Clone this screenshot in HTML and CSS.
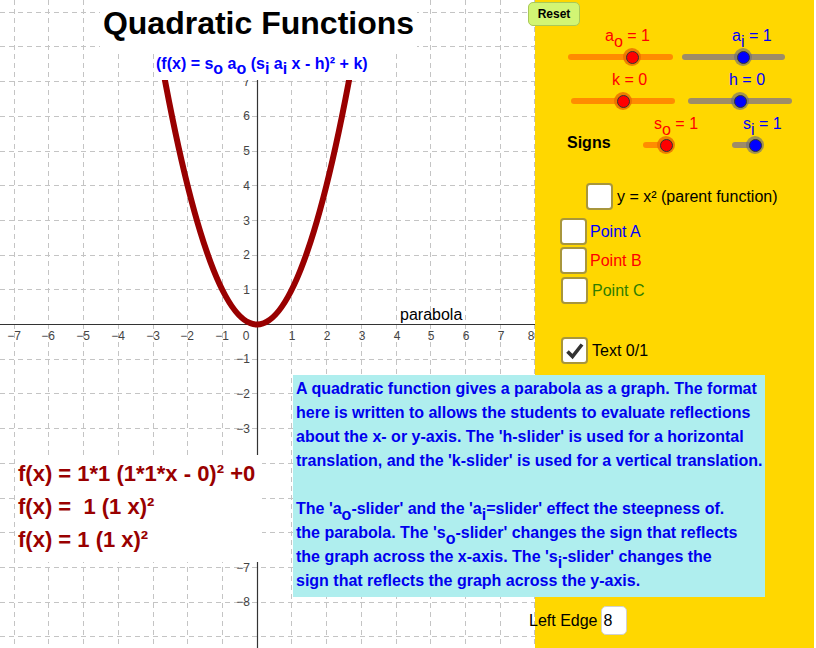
FILE: index.html
```html
<!DOCTYPE html>
<html lang="en">
<head>
<meta charset="utf-8">
<title>Quadratic Functions</title>
<link rel="stylesheet" href="styles.css">
</head>
<body>
<div class="app">
  <div class="graph">
    <svg class="plot" width="535" height="648" viewBox="0 0 535 648" xmlns="http://www.w3.org/2000/svg">
      <g class="grid">
        <line x1="14.5" y1="0" x2="14.5" y2="648"/>
        <line x1="48.5" y1="0" x2="48.5" y2="648"/>
        <line x1="83.5" y1="0" x2="83.5" y2="648"/>
        <line x1="118.5" y1="0" x2="118.5" y2="648"/>
        <line x1="153.5" y1="0" x2="153.5" y2="648"/>
        <line x1="187.5" y1="0" x2="187.5" y2="648"/>
        <line x1="222.5" y1="0" x2="222.5" y2="648"/>
        <line x1="291.5" y1="0" x2="291.5" y2="648"/>
        <line x1="326.5" y1="0" x2="326.5" y2="648"/>
        <line x1="361.5" y1="0" x2="361.5" y2="648"/>
        <line x1="396.5" y1="0" x2="396.5" y2="648"/>
        <line x1="430.5" y1="0" x2="430.5" y2="648"/>
        <line x1="465.5" y1="0" x2="465.5" y2="648"/>
        <line x1="500.5" y1="0" x2="500.5" y2="648"/>
        <line x1="534.5" y1="0" x2="534.5" y2="648"/>
        <line x1="0" y1="12.5" x2="535" y2="12.5"/>
        <line x1="0" y1="46.5" x2="535" y2="46.5"/>
        <line x1="0" y1="81.5" x2="535" y2="81.5"/>
        <line x1="0" y1="116.5" x2="535" y2="116.5"/>
        <line x1="0" y1="151.5" x2="535" y2="151.5"/>
        <line x1="0" y1="185.5" x2="535" y2="185.5"/>
        <line x1="0" y1="220.5" x2="535" y2="220.5"/>
        <line x1="0" y1="255.5" x2="535" y2="255.5"/>
        <line x1="0" y1="289.5" x2="535" y2="289.5"/>
        <line x1="0" y1="359.5" x2="535" y2="359.5"/>
        <line x1="0" y1="393.5" x2="535" y2="393.5"/>
        <line x1="0" y1="428.5" x2="535" y2="428.5"/>
        <line x1="0" y1="463.5" x2="535" y2="463.5"/>
        <line x1="0" y1="498.5" x2="535" y2="498.5"/>
        <line x1="0" y1="532.5" x2="535" y2="532.5"/>
        <line x1="0" y1="567.5" x2="535" y2="567.5"/>
        <line x1="0" y1="602.5" x2="535" y2="602.5"/>
        <line x1="0" y1="636.5" x2="535" y2="636.5"/>
      </g>
      <g class="axes">
        <line x1="0" y1="324.5" x2="535" y2="324.5"/>
        <line x1="257.5" y1="0" x2="257.5" y2="648"/>
      </g>
      <g class="ticks-x">
        <text x="14" y="340">−7</text>
        <text x="48" y="340">−6</text>
        <text x="83" y="340">−5</text>
        <text x="118" y="340">−4</text>
        <text x="153" y="340">−3</text>
        <text x="187" y="340">−2</text>
        <text x="222" y="340">−1</text>
        <text x="246" y="340">0</text>
        <text x="292" y="340">1</text>
        <text x="327" y="340">2</text>
        <text x="362" y="340">3</text>
        <text x="397" y="340">4</text>
        <text x="431" y="340">5</text>
        <text x="466" y="340">6</text>
        <text x="501" y="340">7</text>
        <text x="531" y="340">8</text>
      </g>
      <g class="ticks-y">
        <text x="250" y="85.5">7</text>
        <text x="250" y="120">6</text>
        <text x="250" y="155">5</text>
        <text x="250" y="189.5">4</text>
        <text x="250" y="224.5">3</text>
        <text x="250" y="259">2</text>
        <text x="250" y="293.5">1</text>
        <text x="250" y="363">−1</text>
        <text x="250" y="397.5">−2</text>
        <text x="250" y="432.5">−3</text>
        <text x="250" y="571.5">−7</text>
        <text x="250" y="606">−8</text>
      </g>
      <path class="curve" d="M156.4 32.7 Q257 616.3 357.6 32.7"/>
      <text class="curve-name" x="400" y="319.5">parabola</text>
    </svg>
  </div>

  <div class="panel">
    <div class="row">
      <div class="slider s-ao">
        <div class="lbl red">a<sub>o</sub> = 1</div>
        <div class="track"><div class="bar orange"></div><span class="knob red-knob" style="left:64px"></span></div>
      </div>
      <div class="slider s-ai">
        <div class="lbl blue">a<sub>i</sub> = 1</div>
        <div class="track"><div class="bar gray"></div><span class="knob blue-knob" style="left:61px"></span></div>
      </div>
    </div>
    <div class="row">
      <div class="slider s-k">
        <div class="lbl red">k = 0</div>
        <div class="track"><div class="bar orange"></div><span class="knob red-knob" style="left:52px"></span></div>
      </div>
      <div class="slider s-h">
        <div class="lbl blue">h = 0</div>
        <div class="track"><div class="bar gray"></div><span class="knob blue-knob" style="left:52px"></span></div>
      </div>
    </div>
    <div class="row">
      <div class="signs">Signs</div>
      <div class="slider s-so">
        <div class="lbl red">s<sub>o</sub> = 1</div>
        <div class="track"><div class="bar orange"></div><span class="knob red-knob" style="left:23px"></span></div>
      </div>
      <div class="slider s-si">
        <div class="lbl blue">s<sub>i</sub> = 1</div>
        <div class="track"><div class="bar gray"></div><span class="knob blue-knob" style="left:23px"></span></div>
      </div>
    </div>

    <div class="checks">
      <label class="check c-parent"><span class="box"></span><span class="ctext">y = x² (parent function)</span></label>
      <label class="check c-a"><span class="box"></span><span class="ctext blue">Point A</span></label>
      <label class="check c-b"><span class="box"></span><span class="ctext red">Point B</span></label>
      <label class="check c-c"><span class="box"></span><span class="ctext green">Point C</span></label>
      <label class="check c-text"><span class="box"><svg class="tick" viewBox="0 0 23 23" width="23" height="23"><path d="M4.5 12.5 L9.5 17.5 L19 5.5"/></svg></span><span class="ctext">Text 0/1</span></label>
    </div>
  </div>

  <div class="title">Quadratic Functions</div>
  <div class="subtitle">(f(x) = s<sub>o</sub> a<sub>o</sub> (s<sub>i</sub> a<sub>i</sub> x - h)² + k)</div>

  <div class="formula">
    <div>f(x) = 1*1 (1*1*x - 0)² +0</div>
    <div>f(x) =&nbsp; 1 (1 x)²</div>
    <div>f(x) = 1 (1 x)²</div>
  </div>

  <div class="note">
    A quadratic function gives a parabola as a graph. The format<br>
    here is written to allows the students to evaluate reflections<br>
    about the x- or y-axis. The 'h-slider' is used for a horizontal<br>
    translation, and the 'k-slider' is used for a vertical translation.<br>
    <br>
    The 'a<sub>o</sub>-slider' and the 'a<sub>i</sub>=slider' effect the steepness of.<br>
    the parabola. The 's<sub>o</sub>-slider' changes the sign that reflects<br>
    the graph across the x-axis. The 's<sub>i</sub>-slider' changes the<br>
    sign that reflects the graph across the y-axis.
  </div>

  <button class="reset" type="button">Reset</button>

  <div class="leftedge"><span>Left Edge</span><span class="field">8</span></div>
</div>
</body>
</html>
```

FILE: styles.css
```css
* { box-sizing: border-box; }

html, body {
  margin: 0;
  padding: 0;
  background: #ffffff;
}

body {
  font-family: "Liberation Sans", Arial, sans-serif;
  color: #000;
}

.app {
  position: relative;
  width: 816px;
  height: 648px;
  overflow: hidden;
  display: flex;
}

/* ---------- graph ---------- */
.graph {
  width: 535px;
  height: 648px;
  flex: none;
  background: #fff;
}

.plot { display: block; }

.grid line {
  stroke: #c4c4c4;
  stroke-width: 1;
  stroke-dasharray: 5 4;
}

.axes line {
  stroke: #333;
  stroke-width: 1.2;
}

.ticks-x text,
.ticks-y text {
  font-family: "Liberation Sans", Arial, sans-serif;
  font-size: 12px;
  fill: #444;
}

.ticks-x text { text-anchor: middle; }
.ticks-y text { text-anchor: end; }

.curve {
  fill: none;
  stroke: #990000;
  stroke-width: 6;
}

.curve-name {
  font-family: "Liberation Sans", Arial, sans-serif;
  font-size: 16px;
  fill: #000;
}

/* ---------- right panel ---------- */
.panel {
  width: 279px;
  height: 648px;
  flex: none;
  background: #ffd700;
  padding-top: 27px;
}

.row {
  display: flex;
  height: 44px;
}

.slider {
  flex: none;
}

.lbl {
  height: 18px;
  line-height: 18px;
  font-size: 16px;
  white-space: nowrap;
}

.lbl sub {
  font-size: 16px;
  line-height: 0;
  vertical-align: -6px;
}

.red { color: #ff0000; }
.blue { color: #0000ff; }
.green { color: #2f7d00; }

.track {
  position: relative;
  height: 16px;
  margin-top: 4px;
}

.bar {
  position: absolute;
  left: 0;
  right: 0;
  top: 5px;
  height: 6px;
  border-radius: 3px;
}

.bar.orange { background: #ff8c00; }
.bar.gray { background: #9e8c68; }

.knob {
  position: absolute;
  top: -1px;
  width: 18px;
  height: 18px;
  margin-left: -9px;
  border-radius: 50%;
  display: flex;
  align-items: center;
  justify-content: center;
}

.knob::after {
  content: "";
  width: 11px;
  height: 11px;
  border-radius: 50%;
  border: 1px solid #333;
}

.red-knob { background: rgba(235, 110, 0, 0.85); }
.red-knob::after { background: #ff0000; }

.blue-knob { background: rgba(110, 110, 120, 0.65); }
.blue-knob::after { background: #0000ff; }

.s-ao { margin-left: 33px; width: 105px; }
.s-ao .lbl { padding-left: 37px; }
.s-ai { margin-left: 9px; width: 103px; }
.s-ai .lbl { padding-left: 50px; }

.s-k { margin-left: 36px; width: 104px; }
.s-k .lbl { padding-left: 41px; }
.s-h { margin-left: 13px; width: 104px; }
.s-h .lbl { padding-left: 41px; }

.signs {
  flex: none;
  width: 76px;
  margin-left: 32px;
  margin-top: 19px;
  font-size: 16px;
  font-weight: bold;
  line-height: 18px;
}

.s-so { width: 29px; }
.s-so .lbl { padding-left: 11px; }
.s-si { margin-left: 60px; width: 30px; }
.s-si .lbl { padding-left: 11px; }

/* checkboxes */
.checks {
  display: flex;
  flex-direction: column;
  align-items: flex-start;
  margin-top: 24px;
}

.check {
  display: flex;
  align-items: center;
  font-size: 16px;
  line-height: 18px;
}

.box {
  width: 27px;
  height: 27px;
  border: 2px solid #a8963c;
  border-radius: 4px;
  background: #fff;
  display: flex;
  align-items: center;
  justify-content: center;
}

.tick path {
  fill: none;
  stroke: #333;
  stroke-width: 3.6;
}

.ctext { margin-left: 3px; }

.c-parent { margin-left: 51px; }
.c-parent .ctext { margin-left: 4px; }
.c-a { margin-left: 25px; margin-top: 8px; }
.c-b { margin-left: 25px; margin-top: 2px; }
.c-c { margin-left: 26px; margin-top: 3px; }
.c-c .ctext { margin-left: 4px; }
.c-text { margin-left: 26px; margin-top: 33px; }
.c-text .ctext { margin-left: 4px; }

/* ---------- overlays ---------- */
.title {
  position: absolute;
  left: 100px;
  top: 0;
  width: 317px;
  height: 52px;
  background: #fff;
  text-align: center;
  font-size: 32px;
  font-weight: bold;
  line-height: 36px;
  padding-top: 5px;
  white-space: nowrap;
}

.subtitle {
  position: absolute;
  left: 155px;
  top: 52px;
  width: 215px;
  height: 28px;
  background: #fff;
  color: #0000ff;
  font-size: 16px;
  font-weight: bold;
  line-height: 18px;
  padding-top: 3px;
  padding-left: 1px;
  white-space: nowrap;
}

.subtitle sub {
  font-size: 16px;
  line-height: 0;
  vertical-align: -5px;
}

.formula {
  position: absolute;
  left: 15px;
  top: 455px;
  width: 247px;
  height: 107px;
  background: #fff;
  color: #990000;
  font-size: 22px;
  font-weight: bold;
  line-height: 33px;
  padding: 2px 0 0 3px;
  white-space: nowrap;
}

.note {
  position: absolute;
  left: 293px;
  top: 375px;
  width: 472px;
  height: 222px;
  background: #afeeee;
  color: #0000ee;
  font-size: 16px;
  font-weight: bold;
  line-height: 24px;
  padding: 2px 0 0 3px;
  white-space: nowrap;
}

.note sub {
  font-size: 16px;
  line-height: 0;
  vertical-align: -6px;
}

.reset {
  position: absolute;
  left: 528px;
  top: 2px;
  width: 52px;
  height: 24px;
  margin: 0;
  padding: 0;
  background: #d2f574;
  border: 1px solid #a9c957;
  border-radius: 5px;
  font-family: "Liberation Sans", Arial, sans-serif;
  font-size: 12px;
  font-weight: bold;
  color: #000;
}

.leftedge {
  position: absolute;
  left: 529px;
  top: 606px;
  height: 29px;
  display: flex;
  align-items: center;
  font-size: 16px;
}

.field {
  margin-left: 3px;
  width: 26px;
  height: 29px;
  background: #fff;
  border: 1px solid #d0d0d0;
  border-radius: 5px;
  padding-left: 2px;
  line-height: 27px;
}
```
